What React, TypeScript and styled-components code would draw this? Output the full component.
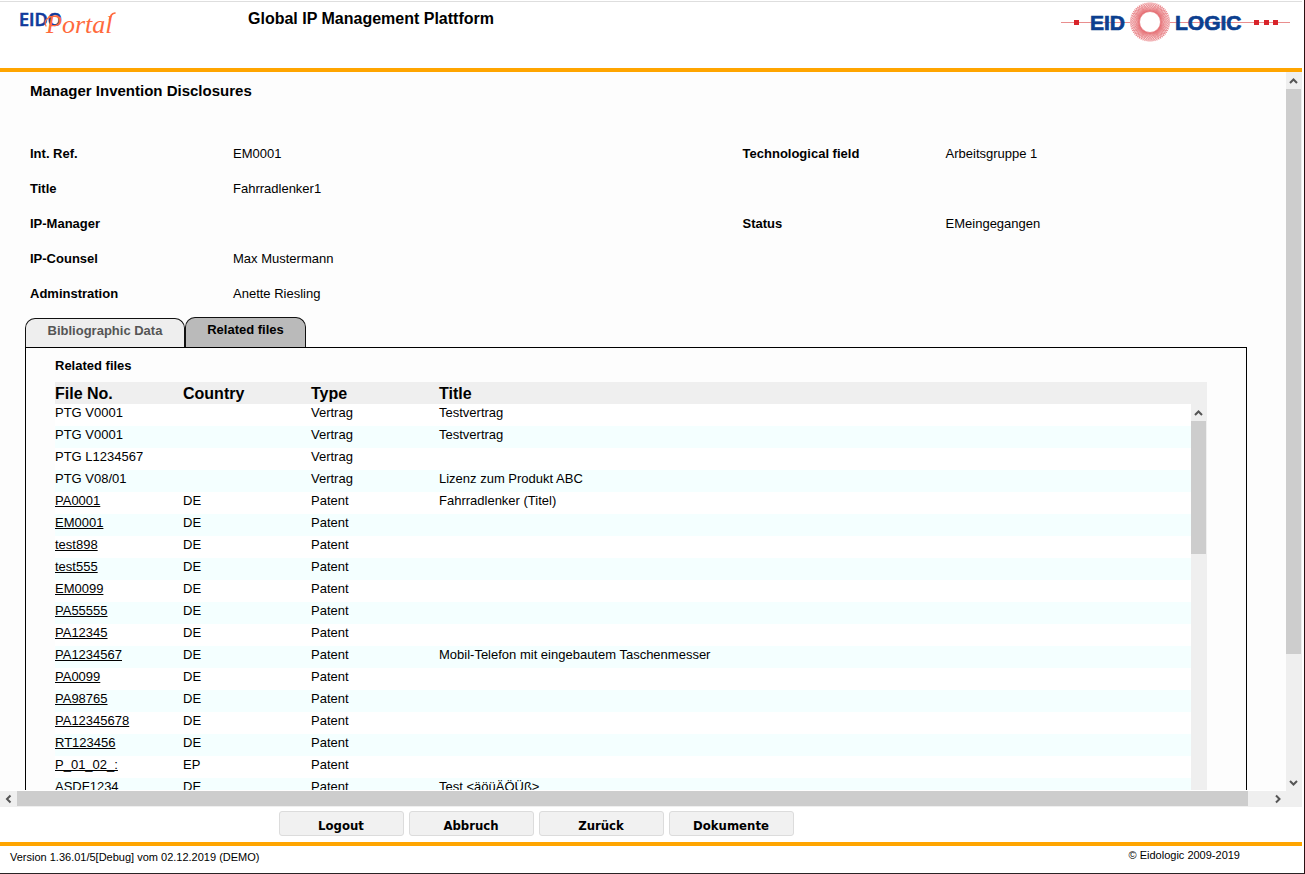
import React from "react";
import styled, { createGlobalStyle } from "styled-components";

const GlobalStyle = createGlobalStyle`
  * { box-sizing: border-box; }
  body {
    margin: 0;
    background: #fff;
    color: #000;
    font: 13px/16px "Liberation Sans", Arial, sans-serif;
  }
`;

const Page = styled.div`
  display: flex;
  flex-direction: column;
  height: 100vh;
  min-height: 480px;
  overflow: hidden;
  padding-right: 2px;
  border-right: 1px solid #2b1013;
  border-bottom: 1px solid #2a2425;
`;

const Header = styled.header`
  display: flex;
  align-items: flex-start;
  flex: none;
  height: 71px;
  margin-top: 1px;
  border-top: 1px solid #dedede;
  border-bottom: 4px solid #ffa500;
`;

const PortalLogo = styled.svg`
  display: block;
  width: 248px;
  height: 44px;
  flex: none;
`;

const AppTitle = styled.h1`
  flex: 1;
  margin: 0;
  padding-top: 7px;
  font-size: 16px;
  line-height: 20px;
`;

const CompanyLogo = styled.svg`
  display: block;
  width: 230px;
  height: 42px;
  flex: none;
  margin-right: 11px;
`;

const Workspace = styled.div`
  display: grid;
  grid-template-columns: minmax(0, 1fr) 16px;
  grid-template-rows: minmax(0, 1fr) 16px;
  flex: 1;
  min-height: 0;
  background: #fdfdfd;
`;

const Main = styled.main`
  min-width: 0;
  overflow: hidden;
  border-bottom: 1px solid #fff;
`;

const PageTitle = styled.h2`
  margin: 0;
  padding: 9px 30px 0;
  font-size: 15px;
  line-height: 20px;
`;

const Details = styled.dl`
  display: grid;
  grid-template-columns: 712fr 543fr;
  grid-auto-rows: 35px;
  margin: 35px 0 0 30px;
`;

const Field = styled.div`
  display: grid;
  grid-template-columns: 203px 1fr;
  align-items: center;
`;

const FieldName = styled.dt`
  font-weight: bold;
`;

const FieldValue = styled.dd`
  margin: 0;
`;

const Tabs = styled.div`
  display: flex;
  align-items: flex-end;
  margin: 6px 0 0 25px;
`;

const Tab = styled.button<{ $active?: boolean }>`
  width: ${(p) => (p.$active ? 121 : 160)}px;
  height: ${(p) => (p.$active ? 30 : 29)}px;
  padding: 0 0 5px;
  border: 1px solid #111;
  border-bottom: 0;
  border-radius: 10px 10px 0 0;
  background: ${(p) => (p.$active ? "#bababa" : "#eee")};
  color: ${(p) => (p.$active ? "#000" : "#555")};
  font: bold 13px/16px "Liberation Sans", Arial, sans-serif;
`;

const Panel = styled.section`
  margin: 0 39px 0 25px;
  padding: 10px 39px 0 29px;
  border: 1px solid #000;
`;

const PanelTitle = styled.h3`
  margin: 0 0 8px;
  font-size: 13px;
  line-height: 16px;
`;

const ListBox = styled.div`
  display: flex;
  background: #efefef;
`;

const FileTable = styled.table`
  flex: 1;
  min-width: 0;
  table-layout: fixed;
  border-collapse: collapse;
`;

const HeadCell = styled.th<{ $wide?: boolean }>`
  width: ${(p) => (p.$wide ? "auto" : "128px")};
  height: 22px;
  padding: 2px 0 0;
  text-align: left;
  font-size: 16px;
  line-height: 20px;
`;

const Row = styled.tr`
  background: #fff;
  &:nth-child(even) { background: #f4ffff; }
`;

const Cell = styled.td`
  height: 22px;
  padding: 0 0 4px;
  white-space: nowrap;
`;

const FileLink = styled.a`
  color: inherit;
  text-underline-offset: 1px;
`;

const Track = styled.div<{ $axis: "x" | "y"; $inset?: boolean }>`
  display: flex;
  flex-direction: ${(p) => (p.$axis === "x" ? "row" : "column")};
  flex: none;
  ${(p) => (p.$axis === "y" ? "width: 16px;" : "height: 16px;")}
  ${(p) => (p.$inset ? "padding-top: 22px;" : "")}
  background: #efefef;
`;

const Thumb = styled.div<{ $axis: "x" | "y"; $share: number }>`
  flex: ${(p) => p.$share} 1 0;
  ${(p) => (p.$axis === "y" ? "margin-right: 1px;" : "margin-bottom: 1px;")}
  background: #cdcdcd;
`;

const Rest = styled.div<{ $share: number }>`
  flex: ${(p) => p.$share} 1 0;
`;

const ArrowBox = styled.button<{ $axis: "x" | "y" }>`
  display: flex;
  align-items: center;
  justify-content: center;
  flex: none;
  width: ${(p) => (p.$axis === "x" ? 17 : 15)}px;
  height: ${(p) => (p.$axis === "x" ? 15 : 17)}px;
  padding: 0;
  border: 0;
  background: transparent;
`;

const Corner = styled.div`
  background: #efefef;
`;

const Actions = styled.nav`
  display: flex;
  justify-content: center;
  gap: 5px;
  flex: none;
  padding: 4px 230px 6px 0;
`;

const ActionButton = styled.button`
  width: 125px;
  height: 25px;
  padding: 4px 0 0;
  border: 1px solid #dcdcdc;
  border-radius: 3px;
  background: #f1f1f1;
  color: #000;
  font: bold 13px/16px "DejaVu Sans Condensed", "DejaVu Sans", sans-serif;
`;

const Footer = styled.footer`
  display: flex;
  justify-content: space-between;
  flex: none;
  height: 31px;
  padding: 2px 62px 0 10px;
  border-top: 4px solid #ffa500;
  font-size: 11px;
  line-height: 14px;
`;

const Version = styled.span`
  padding-top: 2px;
`;

const arrows = {
  up: "M1 7 L4.5 3.5 L8 7",
  down: "M1 3 L4.5 6.5 L8 3",
  left: "M6.5 1.5 L3 5 L6.5 8.5",
  right: "M3 1.5 L6.5 5 L3 8.5",
};

function Arrow({ dir }: { dir: keyof typeof arrows }) {
  const axis = dir === "left" || dir === "right" ? "x" : "y";
  return (
    <ArrowBox type="button" $axis={axis} aria-label={`Scroll ${dir}`}>
      <svg width="9" height="10" viewBox="0 0 9 10">
        <path d={arrows[dir]} fill="none" stroke="#555" strokeWidth="2" />
      </svg>
    </ArrowBox>
  );
}

function Portal() {
  return (
    <PortalLogo viewBox="0 2 248 44" role="img" aria-label="EIDO Portal">
      <text x="19" y="26" fill="#0f3a9c" stroke="#0f3a9c" strokeWidth="0.6" fontFamily="Open Sans, sans-serif" fontWeight="600" fontSize="18">EIDO</text>
      <text x="46" y="33" fill="#ff6a3c" fontFamily="Liberation Serif, serif" fontStyle="italic" fontSize="26">Portal</text>
      <path d="M46 26C43 20 49 15.500 58 16" fill="none" stroke="#ff6a3c" strokeWidth="1.2" strokeLinecap="round" />
      <path d="M109.500 20C110.500 15.500 111.500 13.500 115 13" fill="none" stroke="#ff6a3c" strokeWidth="1.6" strokeLinecap="round" />
    </PortalLogo>
  );
}

const RAY_COUNT = 60;

/* Rays leave the inner ring at a slant; the two opposite slants make the weave. */
const rays = (twist: number) =>
  Array.from({ length: RAY_COUNT }, (_, i) => {
    const a = (i * Math.PI * 2) / RAY_COUNT;
    const b = a + twist;
    return `M${89 + 10.5 * Math.cos(a)} ${20 + 10.5 * Math.sin(a)}L${89 + 20 * Math.cos(b)} ${20 + 19.5 * Math.sin(b)}`;
  }).join("");

function Company() {
  return (
    <CompanyLogo viewBox="0 0 230 42" role="img" aria-label="EIDOLOGIC">
      <path d="M0 20.5H69M109 20.5H229" stroke="#e98e8e" strokeWidth="1" />
      <path d="M13 18h5v5h-5zM193 18h5v5h-5zM203 18h5v5h-5zM212 18h5v5h-5z" fill="#d8232a" />
      <path d={rays(0.6) + rays(-0.6)} stroke="#e0575c" strokeWidth="0.5" fill="none" />
      <circle cx="89" cy="20" r="10.5" fill="#fff" stroke="#e0575c" strokeWidth="0.6" />
      <g fill="#0c3f8f" fontFamily="Liberation Sans, sans-serif" fontWeight="bold" fontSize="21" stroke="#0c3f8f" strokeWidth="0.7">
        <text x="29" y="28">EID</text>
        <text x="114" y="28">LOGIC</text>
      </g>
    </CompanyLogo>
  );
}

const fields: [string, string][] = [
  ["Int. Ref.", "EM0001"],
  ["Technological field", "Arbeitsgruppe 1"],
  ["Title", "Fahrradlenker1"],
  ["", ""],
  ["IP-Manager", ""],
  ["Status", "EMeingegangen"],
  ["IP-Counsel", "Max Mustermann"],
  ["", ""],
  ["Adminstration", "Anette Riesling"],
];

type FileRow = { no: string; country?: string; type: string; title?: string; link?: boolean };

const patent = (no: string, title = "", country = "DE"): FileRow => ({
  no, country, type: "Patent", title, link: true,
});

const files: FileRow[] = [
  { no: "PTG V0001", type: "Vertrag", title: "Testvertrag" },
  { no: "PTG V0001", type: "Vertrag", title: "Testvertrag" },
  { no: "PTG L1234567", type: "Vertrag" },
  { no: "PTG V08/01", type: "Vertrag", title: "Lizenz zum Produkt ABC" },
  patent("PA0001", "Fahrradlenker (Titel)"),
  patent("EM0001"),
  patent("test898"),
  patent("test555"),
  patent("EM0099"),
  patent("PA55555"),
  patent("PA12345"),
  patent("PA1234567", "Mobil-Telefon mit eingebautem Taschenmesser"),
  patent("PA0099"),
  patent("PA98765"),
  patent("PA12345678"),
  patent("RT123456"),
  patent("P_01_02_:", "", "EP"),
  patent("ASDF1234", "Test <äöüÄÖÜß>"),
];

export default function App() {
  return (
    <Page>
      <GlobalStyle />
      <Header>
        <Portal />
        <AppTitle>Global IP Management Plattform</AppTitle>
        <Company />
      </Header>
      <Workspace>
        <Main>
          <PageTitle>Manager Invention Disclosures</PageTitle>
          <Details>
            {fields.map(([name, value], i) =>
              name ? (
                <Field key={i}>
                  <FieldName>{name}</FieldName>
                  <FieldValue>{value}</FieldValue>
                </Field>
              ) : (
                <div key={i} />
              )
            )}
          </Details>
          <Tabs role="tablist">
            <Tab role="tab" type="button" aria-selected={false}>Bibliographic Data</Tab>
            <Tab role="tab" type="button" aria-selected $active>Related files</Tab>
          </Tabs>
          <Panel>
            <PanelTitle>Related files</PanelTitle>
            <ListBox>
              <FileTable>
                <thead>
                  <tr>
                    <HeadCell>File No.</HeadCell>
                    <HeadCell>Country</HeadCell>
                    <HeadCell>Type</HeadCell>
                    <HeadCell $wide>Title</HeadCell>
                  </tr>
                </thead>
                <tbody>
                  {files.map((f, i) => (
                    <Row key={i}>
                      <Cell>{f.link ? <FileLink href="#">{f.no}</FileLink> : f.no}</Cell>
                      <Cell>{f.country}</Cell>
                      <Cell>{f.type}</Cell>
                      <Cell>{f.title}</Cell>
                    </Row>
                  ))}
                </tbody>
              </FileTable>
              <Track $axis="y" $inset>
                <Arrow dir="up" />
                <Thumb $axis="y" $share={133} />
                <Rest $share={246} />
              </Track>
            </ListBox>
          </Panel>
        </Main>
        <Track $axis="y">
          <Arrow dir="up" />
          <Thumb $axis="y" $share={565} />
          <Rest $share={120} />
          <Arrow dir="down" />
        </Track>
        <Track $axis="x">
          <Arrow dir="left" />
          <Thumb $axis="x" $share={1231} />
          <Rest $share={21} />
          <Arrow dir="right" />
        </Track>
        <Corner />
      </Workspace>
      <Actions>
        <ActionButton type="button">Logout</ActionButton>
        <ActionButton type="button">Abbruch</ActionButton>
        <ActionButton type="button">Zurück</ActionButton>
        <ActionButton type="button">Dokumente</ActionButton>
      </Actions>
      <Footer>
        <Version>Version 1.36.01/5[Debug] vom 02.12.2019 (DEMO)</Version>
        <span>© Eidologic 2009-2019</span>
      </Footer>
    </Page>
  );
}
